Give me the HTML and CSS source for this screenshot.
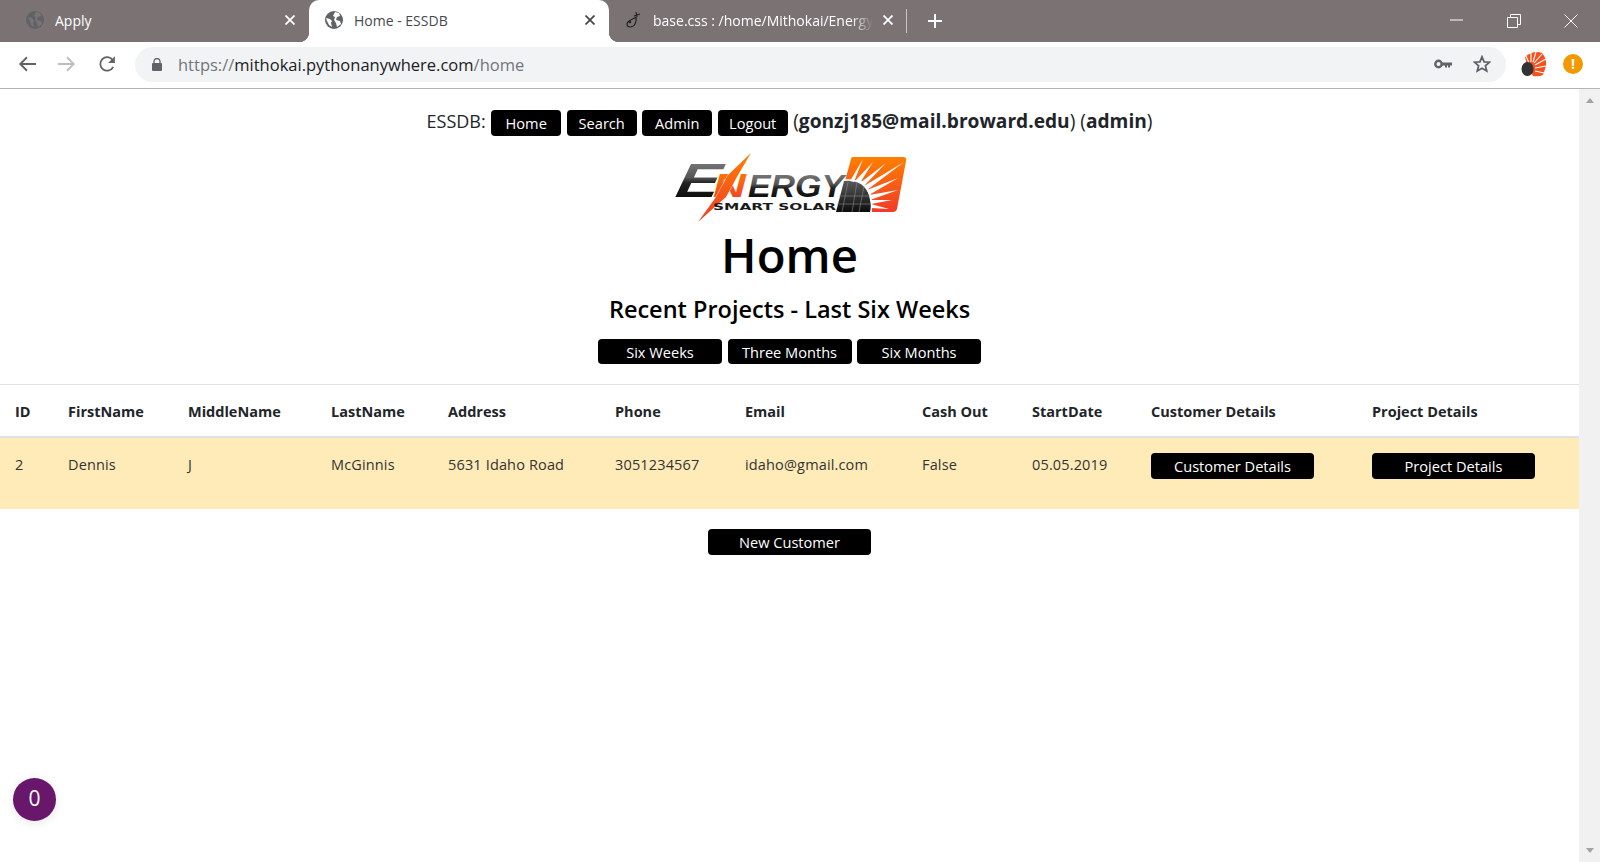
FILE: index.html
```html
<!DOCTYPE html>
<html lang="en">

<head>
    <meta charset="UTF-8">
    <title>Home - ESSDB</title>
    <link rel="stylesheet" href="styles.css">
</head>

<body>
    <div class="tabstrip">
        <div class="tab tab-first">
            <svg class="favicon" viewBox="0 0 18 18"><circle cx="9" cy="9" r="9" fill="#5f6368"/><path d="M2 6l4 1 2 3-1 2 1 4-3-2-1-4zM10 1l4 1 1 3-3 1-1 3 4 1 1 3-4 3-1-4-2-3 1-3-2-1z" fill="#7b7373"/></svg>
            <span class="tab-title">Apply</span>
            <svg class="tab-close" viewBox="0 0 10 10"><path d="M.5.5l9 9M9.500.5l-9 9" stroke="#fff" stroke-width="1.800"/></svg>
        </div>
        <div class="tab tab-active">
            <svg class="favicon" viewBox="0 0 18 18"><circle cx="9" cy="9" r="9" fill="#5f6368"/><path d="M1 7l4 1 2 2-1 2 1 4-3-2-2-4zM10 1l4 1 1 3-3 1-1 3 4 1 1 3-4 3-1-4-2-3 1-3-2-1z" fill="#fff"/></svg>
            <span class="tab-title">Home - ESSDB</span>
            <svg class="tab-close" viewBox="0 0 10 10"><path d="M.5.5l9 9M9.500.5l-9 9" stroke="#45494d" stroke-width="1.800"/></svg>
        </div>
        <div class="tab tab-third">
            <svg class="favicon" viewBox="0 0 18 18" fill="none" stroke="#222" stroke-width="1.200"><path d="M12 1l1 5M10 5l6-2M12 6c1 4-1 10-6 10-3 0-4-3-2-5 2-2 5-3 8-5"/><circle cx="6" cy="11" r=".6"/></svg>
            <span class="tab-title tab-fade">base.css : /home/Mithokai/Energy</span>
            <svg class="tab-close" viewBox="0 0 10 10"><path d="M.5.5l9 9M9.500.5l-9 9" stroke="#fff" stroke-width="1.800"/></svg>
        </div>
        <div class="tab-sep"></div>
        <svg class="new-tab" viewBox="0 0 16 16"><path d="M8 1v14M1 8h14" stroke="#fff" stroke-width="2"/></svg>
        <div class="win-controls">
            <svg viewBox="0 0 14 14"><path d="M0 6h13" stroke="#fff"/></svg>
            <svg viewBox="0 0 14 14" fill="none" stroke="#fff"><path d="M.5 3.500h10v10H.5zM3.500 3V.5h10v10H11"/></svg>
            <svg viewBox="0 0 14 14"><path d="M.5.5l13 13M13.500 .5l-13 13" stroke="#fff"/></svg>
        </div>
    </div>

    <div class="toolbar">
        <svg class="nav-icon" viewBox="0 0 16 16"><path d="M16 8H2M8 2L2 8l6 6" fill="none" stroke="#5f6368" stroke-width="1.600"/></svg>
        <svg class="nav-icon" viewBox="0 0 16 16"><path d="M0 8h14M8 2l6 6-6 6" fill="none" stroke="#bcbec1" stroke-width="1.600"/></svg>
        <svg class="nav-icon" viewBox="0 0 16 16"><path d="M13.500 10.500A6 6 0 1 1 13 4.500" fill="none" stroke="#5f6368" stroke-width="1.600"/><path d="M15 1v6H9z" fill="#5f6368"/></svg>
        <div class="omnibox">
            <svg class="lock" viewBox="0 0 10 13"><path d="M2 5V3.500a3 3 0 0 1 6 0V5" fill="none" stroke="#5f6368" stroke-width="1.300"/><rect y="5" width="10" height="8" rx="1" fill="#5f6368"/></svg>
            <span class="url"><span class="url-dim">https://</span>mithokai.pythonanywhere.com<span class="url-dim">/home</span></span>
            <svg class="key" viewBox="0 0 18 10"><circle cx="4.500" cy="5" r="3.200" fill="none" stroke="#5f6368" stroke-width="2.400"/><path d="M8 3.500h10v3h-2v2h-2v-2h-1v2h-2v-2H8z" fill="#5f6368"/></svg>
            <svg class="star" viewBox="0 0 18 18"><path d="M9 1.800l2.100 5 5.400.4-4.100 3.500 1.300 5.300L9 13.200 4.300 16l1.300-5.300L1.500 7.200l5.400-.4z" fill="none" stroke="#5f6368" stroke-width="1.800"/></svg>
        </div>
        <svg class="ext-sun" viewBox="0 0 26 26">
            <path d="M4 6Q12-1 21 2Q26 8 25 15L22 24Q18 26 12 25L6 14Z" fill="#f4511e"/>
            <path d="M8 12L5 5M10 11L10 1M12 11L15 1M13 12L21 3M14 14L25 8M14 17L25 15M14 20L23 22" stroke="#fff" stroke-width="1.100"/>
            <ellipse cx="6.500" cy="18" rx="6" ry="7" fill="#333"/>
        </svg>
        <div class="ext-alert">!</div>
    </div>

    <div class="viewport">
        <main class="page">
            <div class="topnav">
                <span class="brand">ESSDB:</span>
                <a class="btn btn-nav">Home</a>
                <a class="btn btn-nav">Search</a>
                <a class="btn btn-nav">Admin</a>
                <a class="btn btn-nav">Logout</a>
                <span class="user">(<b>gonzj185@mail.broward.edu</b>) (<b>admin</b>)</span>
            </div>

            <svg class="logo" viewBox="0 0 234 72">
                <defs>
                    <linearGradient id="metal" x1="0" y1="0" x2="0" y2="1">
                        <stop offset="0" stop-color="#8c8c8c"/>
                        <stop offset=".45" stop-color="#555"/>
                        <stop offset=".55" stop-color="#222"/>
                        <stop offset="1" stop-color="#000"/>
                    </linearGradient>
                    <linearGradient id="flame" x1="0" y1="0" x2="0" y2="1">
                        <stop offset="0" stop-color="#ff7f00"/>
                        <stop offset="1" stop-color="#ef3b2a"/>
                    </linearGradient>
                    <linearGradient id="cell" x1="0" y1="0" x2="0" y2="1">
                        <stop offset="0" stop-color="#5a5a5a"/>
                        <stop offset="1" stop-color="#0c0c0c"/>
                    </linearGradient>
                </defs>
                <path d="M180 6H230Q234 6 233 10L224 58Q223 61 220 61H199L190 30H172L178 8Q178 6 180 6Z" fill="url(#flame)"/>
                <path d="M163 61L171 30Q190 28 196 44Q199 52 197 61Z" fill="url(#cell)" stroke="#fff" stroke-width="3" paint-order="stroke"/>
                <path d="M177 30L190 8 181 31ZM182 30L200 11 187 32ZM187 32L213 12 191 35ZM191 35L231 11 194 39ZM194 39L225 27 196 44ZM196 44L225 39 197 49ZM197 49L219 49 198 53ZM198 53L216 58 198 57Z" fill="#fff"/>
                <path d="M175 31l-6 30M184 31l-5 30M191 35l-5 26M166 45h31M164 53h34" stroke="#8a8a8a" stroke-width=".6"/>
                <text class="logo-big" x="1" y="46" textLength="43" lengthAdjust="spacingAndGlyphs" transform="translate(10 0) skewX(-12)" fill="url(#metal)">E</text>
                <text class="logo-small" x="75" y="46" textLength="96" lengthAdjust="spacingAndGlyphs" fill="url(#metal)">ERGY</text>
                <text class="logo-mid" x="40" y="46" textLength="33" lengthAdjust="spacingAndGlyphs" fill="url(#flame)">N</text>
                <path d="M78 2L55 24L43 46L25 71L53 46L65 24Z" fill="url(#flame)" stroke="#fff" stroke-width=".8" paint-order="stroke"/>
                <text class="logo-sub" x="40" y="59" textLength="123" lengthAdjust="spacingAndGlyphs" fill="#1a1a1a">SMART SOLAR</text>
            </svg>

            <h1>Home</h1>
            <h3>Recent Projects - Last Six Weeks</h3>

            <div class="ranges">
                <a class="btn btn-range">Six Weeks</a>
                <a class="btn btn-range">Three Months</a>
                <a class="btn btn-range">Six Months</a>
            </div>

            <table>
                <colgroup>
                    <col class="c-id">
                    <col class="c-first">
                    <col class="c-middle">
                    <col class="c-last">
                    <col class="c-address">
                    <col class="c-phone">
                    <col class="c-email">
                    <col class="c-cash">
                    <col class="c-start">
                    <col class="c-customer">
                    <col class="c-project">
                </colgroup>
                <thead>
                    <tr>
                        <th>ID</th>
                        <th>FirstName</th>
                        <th>MiddleName</th>
                        <th>LastName</th>
                        <th>Address</th>
                        <th>Phone</th>
                        <th>Email</th>
                        <th>Cash Out</th>
                        <th>StartDate</th>
                        <th>Customer Details</th>
                        <th>Project Details</th>
                    </tr>
                </thead>
                <tbody>
                    <tr>
                        <td>2</td>
                        <td>Dennis</td>
                        <td>J</td>
                        <td>McGinnis</td>
                        <td>5631 Idaho Road</td>
                        <td>3051234567</td>
                        <td>idaho@gmail.com</td>
                        <td>False</td>
                        <td>05.05.2019</td>
                        <td><a class="btn btn-row btn-cell">Customer Details</a></td>
                        <td><a class="btn btn-row btn-cell">Project Details</a></td>
                    </tr>
                </tbody>
            </table>

            <div class="new-row">
                <a class="btn btn-row">New Customer</a>
            </div>

            <div class="chat-badge">0</div>
        </main>

        <aside class="scrollbar">
            <span class="arrow-up"></span>
            <span class="arrow-down"></span>
        </aside>
    </div>
</body>

</html>
```

FILE: styles.css
```css
* {
    box-sizing: border-box;
}

html,
body {
    height: 100%;
}

body {
    margin: 0;
    display: flex;
    flex-direction: column;
    overflow: hidden;
    background-color: #fff;
    color: #212529;
    font-family: "Open Sans", "Noto Sans", sans-serif;
}

/* browser chrome */
.tabstrip {
    height: 42px;
    flex: none;
    display: flex;
    align-items: center;
    background-color: #7b7373;
}

.tab {
    width: 300px;
    height: 42px;
    flex: none;
    display: flex;
    align-items: center;
    padding: 0 14px 2px 16px;
    color: #fff;
    font-size: 14px;
}

.tab-first {
    width: 309px;
    padding-left: 26px;
    padding-right: 14px;
}

.tab-active {
    position: relative;
    background-color: #fff;
    color: #45494d;
    border-radius: 10px 10px 0 0;
}

/* flares that round off the neighbouring tabs */
.tab-active::before,
.tab-active::after {
    content: "";
    position: absolute;
    bottom: 0;
    width: 10px;
    height: 10px;
}

.tab-active::before {
    left: -10px;
    background: radial-gradient(circle at 0 0, transparent 10px, #fff 10.500px);
}

.tab-active::after {
    right: -10px;
    background: radial-gradient(circle at 100% 0, transparent 10px, #fff 10.500px);
}

.tab-third {
    width: 298px;
    padding-left: 15px;
    padding-right: 14px;
}

.favicon {
    width: 18px;
    height: 18px;
    flex: none;
    margin-right: 11px;
}

.tab-title {
    flex: 1;
    overflow: hidden;
    white-space: nowrap;
}

.tab-fade {
    margin-right: 10px;
    -webkit-mask-image: linear-gradient(to left, transparent, #000 22px);
    mask-image: linear-gradient(to left, transparent, #000 22px);
}

.tab-close {
    width: 10px;
    height: 10px;
    flex: none;
}

.tab-sep {
    width: 1px;
    height: 24px;
    background-color: #c9c5c5;
    margin-left: -1px;
}

.new-tab {
    width: 16px;
    height: 16px;
    margin-left: 20px;
}

.win-controls {
    margin-left: auto;
    display: flex;
    gap: 43px;
    padding-right: 22px;
}

.win-controls svg {
    width: 14px;
    height: 14px;
    display: block;
}

.toolbar {
    height: 47px;
    flex: none;
    display: flex;
    align-items: center;
    padding: 0 17px 2px 18px;
    background-color: #fff;
    border-bottom: 1px solid #b4b4b4;
}

.nav-icon {
    width: 18px;
    height: 18px;
    flex: none;
    margin-right: 22px;
}

.omnibox {
    flex: 1;
    height: 35px;
    margin-left: -3px;
    display: flex;
    align-items: center;
    padding: 0 15px 0 17px;
    background-color: #f1f3f4;
    border-radius: 18px;
}

.lock {
    width: 10px;
    height: 13px;
    margin-right: 16px;
}

.url {
    flex: 1;
    font-size: 16.500px;
    color: #202124;
}

.url-dim {
    color: #72767a;
}

.key {
    width: 18px;
    height: 10px;
    margin-right: 21px;
}

.star {
    width: 18px;
    height: 18px;
}

.ext-sun {
    width: 26px;
    height: 26px;
    margin-left: 15px;
}

.ext-alert {
    width: 20px;
    height: 20px;
    margin-left: 16px;
    border-radius: 50%;
    background-color: #f29900;
    color: #fff;
    font-size: 14px;
    font-weight: bold;
    line-height: 20px;
    text-align: center;
}

.viewport {
    flex: 1;
    display: flex;
    min-height: 0;
}

.scrollbar {
    width: 21px;
    flex: none;
    display: flex;
    flex-direction: column;
    justify-content: space-between;
    align-items: center;
    padding: 9px 0 9px;
    background-color: #f1f1f1;
}

.arrow-up,
.arrow-down {
    width: 0;
    height: 0;
    border-left: 4.500px solid transparent;
    border-right: 4.500px solid transparent;
}

.arrow-up {
    border-bottom: 5px solid #a3a3a3;
}

.arrow-down {
    border-top: 5px solid #a3a3a3;
}

/* page */
.page {
    flex: 1;
    min-width: 0;
    position: relative;
    text-align: center;
}

.topnav {
    height: 47px;
    display: flex;
    justify-content: center;
    align-items: flex-start;
    gap: 5.500px;
    padding-top: 21px;
    font-size: 18px;
}

.brand {
    line-height: 22px;
}

.user {
    line-height: 22px;
    font-size: 19.150px;
}

.btn {
    display: inline-block;
    background-color: #000;
    color: #fff;
    border-radius: 4px;
    font-size: 14.600px;
    text-align: center;
    height: 26px;
    line-height: 27px;
}

.btn-nav {
    width: 70px;
}

.logo {
    display: block;
    width: 234px;
    height: 72px;
    margin: 15px auto 0;
    overflow: visible;
}

h1 {
    margin: 2px 0 0;
    font-size: 47.300px;
    font-weight: 600;
    line-height: 60px;
    color: #000;
}

h3 {
    margin: 7px 0 0;
    font-size: 23.500px;
    font-weight: 600;
    line-height: 34px;
    color: #000;
}

.ranges {
    display: flex;
    justify-content: center;
    gap: 5.500px;
    margin-top: 13px;
}

.btn-range {
    width: 124px;
    height: 25px;
}

table {
    width: 100%;
    table-layout: fixed;
    border-collapse: collapse;
    margin-top: 20px;
    text-align: left;
    font-size: 14.500px;
}

th {
    height: 52px;
    padding: 2px 0 0 16px;
    border-top: 1px solid #dee2e6;
    border-bottom: 2px solid #dee2e6;
    font-weight: bold;
    color: #212529;
}

td {
    height: 72px;
    padding: 17px 0 0 16px;
    vertical-align: top;
    background-color: #ffebb8;
    color: #333;
    letter-spacing: 0.15px;
}

th:first-child,
td:first-child {
    padding-left: 15px;
}

.c-id { width: 52px; }
.c-first { width: 120px; }
.c-middle { width: 143px; }
.c-last { width: 117px; }
.c-address { width: 167px; }
.c-phone { width: 130px; }
.c-email { width: 177px; }
.c-cash { width: 110px; }
.c-start { width: 119px; }
.c-customer { width: 221px; }
.c-project { width: 223px; }

.btn-row {
    width: 163px;
    letter-spacing: 0;
}

.btn-cell {
    margin-top: -2px;
}

.new-row {
    margin-top: 20px;
}

.chat-badge {
    position: absolute;
    left: 13px;
    bottom: 41px;
    width: 43px;
    height: 43px;
    border-radius: 50%;
    background-color: #68176b;
    box-shadow: 0 2px 10px rgba(0, 0, 0, 0.1);
    color: #fff;
    font-size: 21px;
    font-weight: 500;
    line-height: 41px;
    text-align: center;
}

.logo-big,
.logo-mid,
.logo-small {
    font-family: "Liberation Sans", sans-serif;
    font-weight: bold;
    font-style: italic;
}

.logo-big {
    font-size: 48px;
}

.logo-mid {
    font-size: 33px;
}

.logo-small {
    font-size: 32px;
}

.logo-sub {
    font-family: "DejaVu Sans", sans-serif;
    font-size: 9.500px;
    font-weight: bold;
}
```
